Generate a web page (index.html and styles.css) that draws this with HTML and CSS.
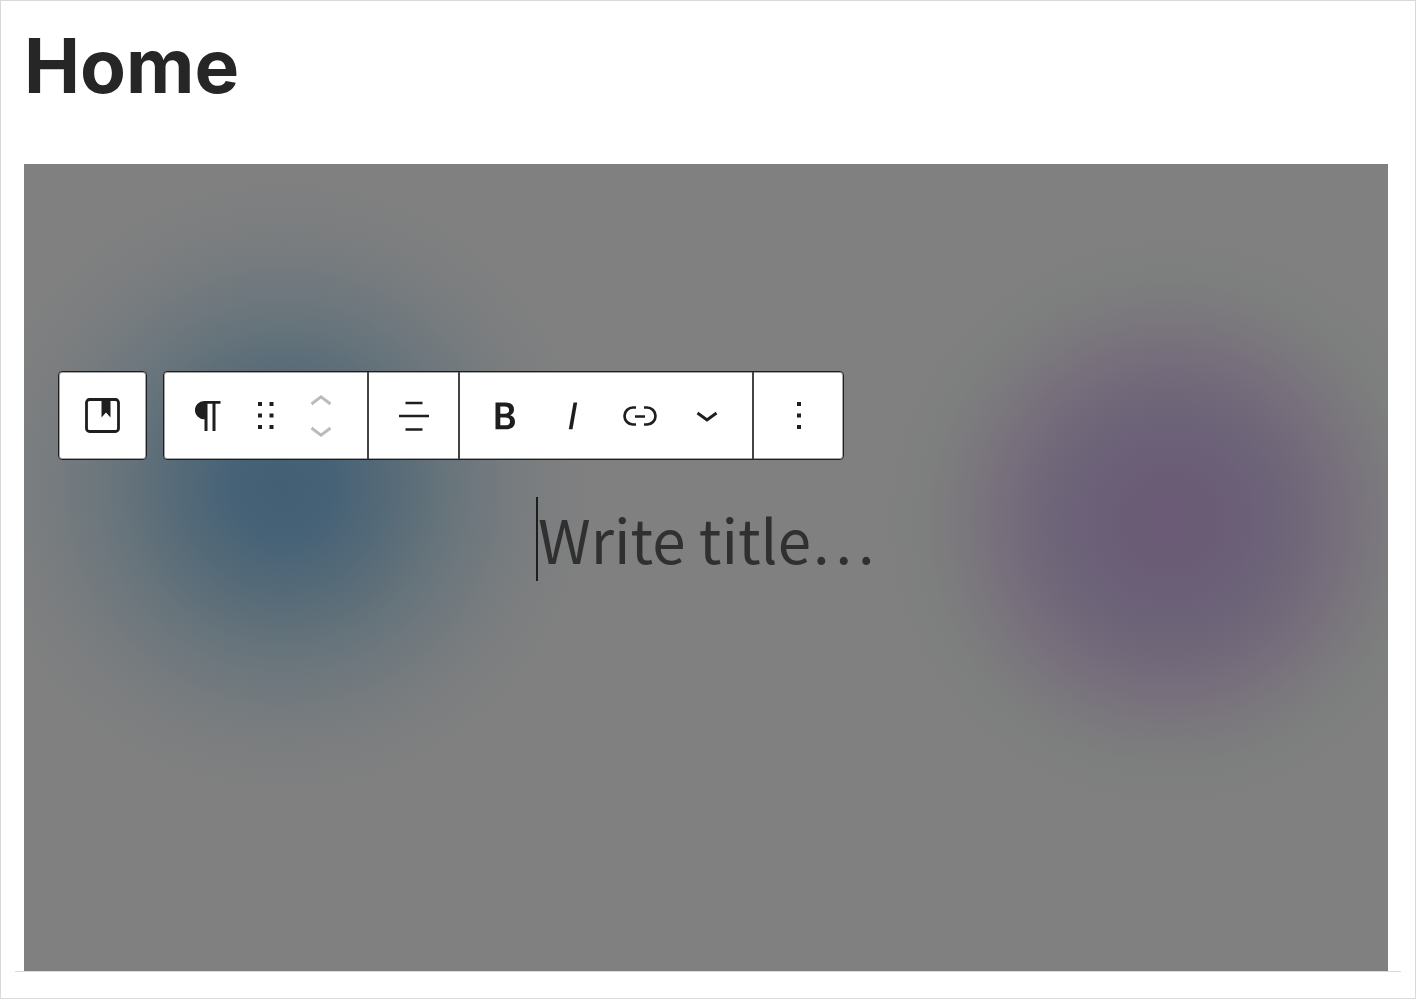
FILE: index.html
```html
<!DOCTYPE html>
<html lang="en">
<head>
<meta charset="utf-8">
<title>Home</title>
<link rel="stylesheet" href="styles.css">
</head>
<body>
<main class="editor">
  <h1 class="page-title">Home</h1>
  <div class="canvas">
    <section class="cover" aria-label="Cover">
      <div class="toolbars" role="toolbar" aria-label="Block tools">
        <div class="toolbar parent">
          <button class="tool" type="button" aria-label="Select parent block: Cover">
            <svg width="35" height="35" viewBox="0 0 35 35"><rect x="1.500" y="1.500" width="32" height="32" rx="3" fill="none" stroke="currentColor" stroke-width="2.800"/><path d="M16.500 2h9v17.500l-4.500-5-4.500 5z" fill="currentColor"/></svg>
          </button>
        </div>
        <div class="toolbar">
          <div class="group block-group">
            <button class="tool type" type="button" aria-label="Paragraph">
              <svg width="26" height="30" viewBox="0 0 26 30"><path d="M10 0h15.500v2.800H20.500V30h-3V2.800h-5V30h-3V18.200H9A9 9 0 0 1 9 0z" fill="currentColor"/></svg>
            </button>
            <button class="tool drag" type="button" aria-label="Drag">
              <svg width="16" height="28" viewBox="0 0 16 28"><path d="M0 0h4v4H0zM11.500 0h4v4h-4zM0 11.500h4v4H0zM11.500 11.500h4v4h-4zM0 23h4v4H0zM11.500 23h4v4h-4z" fill="currentColor"/></svg>
            </button>
            <div class="movers">
              <button class="mover" type="button" aria-label="Move up" disabled>
                <svg width="22" height="12" viewBox="0 0 22 12"><path d="M1.500 10 11 2.800 20.500 10" fill="none" stroke="currentColor" stroke-width="2.900"/></svg>
              </button>
              <button class="mover" type="button" aria-label="Move down" disabled>
                <svg width="22" height="12" viewBox="0 0 22 12"><path d="M1.500 2 11 9.200 20.500 2" fill="none" stroke="currentColor" stroke-width="2.900"/></svg>
              </button>
            </div>
          </div>
          <div class="group">
            <button class="tool" type="button" aria-label="Align">
              <svg width="30" height="30" viewBox="0 0 30 30"><path d="M6.500 2h17M0 15h30M6.500 28.500h17" fill="none" stroke="currentColor" stroke-width="2.700"/></svg>
            </button>
          </div>
          <div class="group format-group">
            <button class="tool format" type="button" aria-label="Bold">
              <svg width="22" height="28" viewBox="0 0 22 28"><path fill-rule="evenodd" d="M.5.500h9.500c6 0 9 2.600 9 7 0 2.800-1.300 4.700-3.700 5.700 3 .9 4.700 3.200 4.700 6.500 0 5-3.400 7.600-9.500 7.600H.5zM5.300 4.500v7.300h4.300c3 0 4.500-1.200 4.500-3.700 0-2.400-1.500-3.600-4.500-3.600zm0 11v7.800h4.900c3.200 0 4.800-1.300 4.800-3.900s-1.600-3.900-4.800-3.900z" fill="currentColor"/></svg>
            </button>
            <button class="tool format" type="button" aria-label="Italic">
              <svg width="10" height="28" viewBox="0 0 10 28"><path d="M5.500.500h3.700L4.500 27.300H.800z" fill="currentColor"/></svg>
            </button>
            <button class="tool format" type="button" aria-label="Link">
              <svg width="34" height="20" viewBox="0 0 34 20"><path d="M13 1.500h-3a8.500 8.500 0 0 0 0 17h3M21 1.500h3a8.500 8.500 0 0 1 0 17h-3M12 10.500h10" fill="none" stroke="currentColor" stroke-width="2.700"/></svg>
            </button>
            <button class="tool format" type="button" aria-label="More">
              <svg width="22" height="12" viewBox="0 0 22 12"><path d="M1.500 3 11 10 20.500 3" fill="none" stroke="currentColor" stroke-width="2.900"/></svg>
            </button>
          </div>
          <div class="group">
            <button class="tool" type="button" aria-label="Options">
              <svg width="4" height="28" viewBox="0 0 4 28"><path d="M0 0h4v4H0zM0 11.500h4v4H0zM0 23h4v4H0z" fill="currentColor"/></svg>
            </button>
          </div>
        </div>
      </div>
      <input class="title-input" type="text" aria-label="Title" placeholder="Write title…">
    </section>
  </div>
</main>
</body>
</html>
```
FILE: styles.css
```css
* {
  box-sizing: border-box;
}

body {
  margin: 0;
  background: #fff;
  color: #1e1e1e;
  font-family: Inter, sans-serif;
}

.editor {
  display: flex;
  flex-direction: column;
  min-height: calc(100vh - 1px);
  margin: 0 1px 1px 0;
  padding: 19px 14px 26px;
  border: 1px solid #d9d9d9;
}

.page-title {
  margin: 0 9px 52px;
  color: #262626;
  font-size: 75px;
  font-weight: 700;
  line-height: 92px;
}

.canvas {
  display: flex;
  flex: 1;
  padding: 0 13px 0 9px;
  border-bottom: 1px solid #d9d9d9;
}

.cover {
  display: flex;
  flex: 1;
  flex-direction: column;
  gap: 37px;
  padding: 207px 34px 40px;
  background:
    radial-gradient(circle 310px at 19% 40%, #425f74 0, #466277 16%, #576b78 36%, #67747b 53%, #71797e 66%, #7a7d7f 80%, rgba(128, 128, 128, 0) 100%),
    radial-gradient(circle 290px at 84% 358px, #6b5b76 0, #6b5c76 15%, #6b6078 28%, #706779 45%, #77707c 60%, #7b787d 72%, #7d7e7e 84%, rgba(128, 128, 128, 0) 100%),
    #808080;
}

.toolbars {
  display: flex;
  gap: 16px;
}

.toolbar {
  display: flex;
  height: 89px;
  border: 1px solid #1e1e1e;
  border-radius: 4px;
  background: #fff;
  box-shadow: inset 0 0 0 1px rgba(0, 0, 0, 0.35);
}

.parent {
  width: 89px;
}

.group {
  display: flex;
}

.group + .group {
  border-left: 2px solid #444;
}

.block-group {
  padding: 0 18px 0 13px;
}

.format-group {
  padding: 0 12px;
}

.tool,
.mover {
  display: flex;
  align-items: center;
  justify-content: center;
  width: 89px;
  margin: 0;
  padding: 0;
  border: 0;
  background: none;
  color: inherit;
}

.type {
  width: 62px;
}

.drag {
  width: 54px;
}

.format {
  width: 67px;
}

.movers {
  display: flex;
  flex-direction: column;
  justify-content: center;
  gap: 20px;
}

.mover {
  width: 56px;
  color: #bbb;
}

.title-input {
  align-self: center;
  width: 340px;
  height: 84px;
  padding: 0 0 4px;
  border: 0;
  border-left: 2px solid #1e1e1e;
  outline: 0;
  background: none;
  color: #1e1e1e;
  font-family: "Noto Sans CJK KR", sans-serif;
  font-size: 60px;
  line-height: 80px;
}

.title-input::placeholder {
  color: #303030;
  opacity: 1;
}
```
